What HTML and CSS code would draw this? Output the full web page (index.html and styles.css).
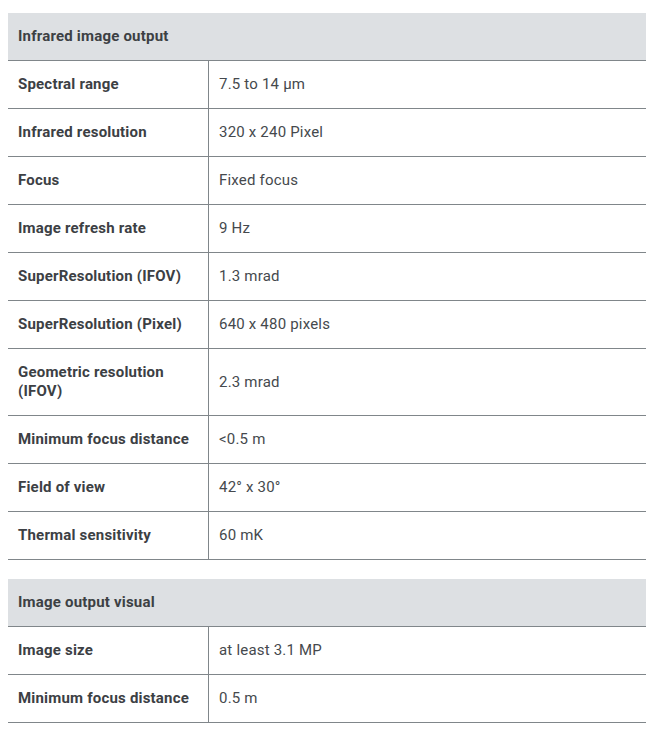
FILE: index.html
```html
<!DOCTYPE html>
<html lang="en">
<head>
<meta charset="utf-8">
<title>Specifications</title>
<link rel="stylesheet" href="styles.css">
</head>
<body>
<div class="specs">
  <section class="spec-table">
    <div class="spec-head">Infrared image output</div>
    <div class="spec-row"><div class="spec-label">Spectral range</div><div class="spec-value">7.5 to 14 µm</div></div>
    <div class="spec-row"><div class="spec-label">Infrared resolution</div><div class="spec-value">320 x 240 Pixel</div></div>
    <div class="spec-row"><div class="spec-label">Focus</div><div class="spec-value">Fixed focus</div></div>
    <div class="spec-row"><div class="spec-label">Image refresh rate</div><div class="spec-value">9 Hz</div></div>
    <div class="spec-row"><div class="spec-label">SuperResolution (IFOV)</div><div class="spec-value">1.3 mrad</div></div>
    <div class="spec-row"><div class="spec-label">SuperResolution (Pixel)</div><div class="spec-value">640 x 480 pixels</div></div>
    <div class="spec-row"><div class="spec-label">Geometric resolution (IFOV)</div><div class="spec-value">2.3 mrad</div></div>
    <div class="spec-row"><div class="spec-label">Minimum focus distance</div><div class="spec-value">&lt;0.5 m</div></div>
    <div class="spec-row"><div class="spec-label">Field of view</div><div class="spec-value">42° x 30°</div></div>
    <div class="spec-row"><div class="spec-label">Thermal sensitivity</div><div class="spec-value">60 mK</div></div>
  </section>
  <section class="spec-table">
    <div class="spec-head">Image output visual</div>
    <div class="spec-row"><div class="spec-label">Image size</div><div class="spec-value">at least 3.1 MP</div></div>
    <div class="spec-row"><div class="spec-label">Minimum focus distance</div><div class="spec-value">0.5 m</div></div>
  </section>
</div>
</body>
</html>
```
FILE: styles.css
```css
html, body {
  margin: 0;
  padding: 0;
  background: #ffffff;
  overflow: hidden;
}
body {
  padding: 13px 0 0 8px;
  font-family: Roboto, "Liberation Sans", Arial, sans-serif;
  font-size: 15px;
  line-height: 19px;
  letter-spacing: 0.2px;
  color: #3c4044;
}
.specs {
  width: 640px;
  display: flex;
  flex-direction: column;
  gap: 19px;
}
.spec-table {
  display: flex;
  flex-direction: column;
}
.spec-head {
  background: #dde0e3;
  font-weight: 700;
  padding: 14px 10px 14px;
  border-bottom: 1px solid #80868a;
}
.spec-row {
  display: grid;
  grid-template-columns: 201px 1fr;
  border-bottom: 1px solid #80868a;
}
.spec-label {
  font-weight: 700;
  padding: 14px 10px 14px 10px;
  border-right: 1px solid #80868a;
}
.spec-value {
  padding: 14px 10px;
  display: flex;
  align-items: center;
  color: #45494d;
}
```
